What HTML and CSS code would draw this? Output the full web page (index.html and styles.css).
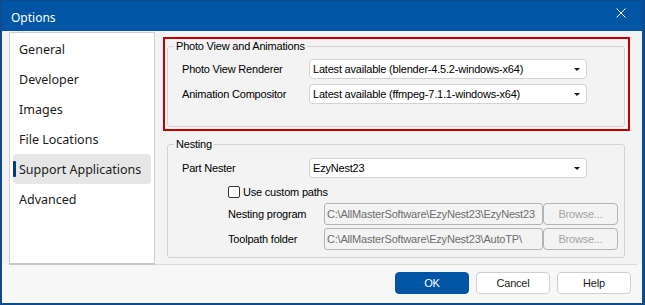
FILE: index.html
```html
<!DOCTYPE html>
<html lang="en">
<head>
<meta charset="utf-8">
<title>Options</title>
<link rel="stylesheet" href="styles.css">
</head>
<body>
<div class="window">
  <header class="titlebar">
    <span class="title">Options</span>
    <svg class="close" width="10" height="10" viewBox="0 0 10 10" aria-hidden="true">
      <path d="M0.5 0.5 L9.5 9.5 M9.5 0.5 L0.5 9.5" stroke="#ffffff" stroke-width="1" fill="none"/>
    </svg>
  </header>
  <div class="content">
    <nav class="sidebar">
      <div class="nav-item">General</div>
      <div class="nav-item">Developer</div>
      <div class="nav-item">Images</div>
      <div class="nav-item">File Locations</div>
      <div class="nav-item selected">Support Applications</div>
      <div class="nav-item">Advanced</div>
    </nav>
    <main class="panel">
      <div class="highlight">
        <fieldset class="group group-photo">
          <legend>Photo View and Animations</legend>
          <div class="rows">
            <div class="row">
              <span class="label">Photo View Renderer</span>
              <div class="combo"><span class="combo-text">Latest available (blender-4.5.2-windows-x64)</span><span class="arrow"></span></div>
            </div>
            <div class="row">
              <span class="label">Animation Compositor</span>
              <div class="combo"><span class="combo-text">Latest available (ffmpeg-7.1.1-windows-x64)</span><span class="arrow"></span></div>
            </div>
          </div>
        </fieldset>
      </div>
      <fieldset class="group group-nest">
        <legend>Nesting</legend>
        <div class="rows">
          <div class="row">
            <span class="label">Part Nester</span>
            <div class="combo"><span class="combo-text">EzyNest23</span><span class="arrow"></span></div>
          </div>
          <div class="row check-row">
            <span class="checkbox"></span>
            <span class="check-label">Use custom paths</span>
          </div>
          <div class="row path-row">
            <span class="path-label">Nesting program</span>
            <div class="textbox">C:\AllMasterSoftware\EzyNest23\EzyNest23</div>
            <div class="browse">Browse...</div>
          </div>
          <div class="row path-row second">
            <span class="path-label">Toolpath folder</span>
            <div class="textbox">C:\AllMasterSoftware\EzyNest23\AutoTP\</div>
            <div class="browse">Browse...</div>
          </div>
        </div>
      </fieldset>
    </main>
  </div>
  <footer class="footer">
    <button class="btn primary">OK</button>
    <button class="btn">Cancel</button>
    <button class="btn">Help</button>
  </footer>
</div>
</body>
</html>
```

FILE: styles.css
```css
html, body {
  margin: 0;
  padding: 0;
  background: #f3f3f3;
}

.window {
  width: 645px;
  height: 305px;
  box-sizing: border-box;
  border-style: solid;
  border-color: #0c4b8e;
  border-width: 1px 3px 2px 2px;
  background: #f3f3f3;
  display: flex;
  flex-direction: column;
  overflow: hidden;
  font-family: "Liberation Sans", Arial, sans-serif;
  font-size: 11px;
  letter-spacing: -0.2px;
  color: #000;
}

.titlebar {
  height: 30px;
  flex: none;
  background: #0055a5;
  display: flex;
  align-items: center;
  justify-content: space-between;
  padding: 0 16px 0 9px;
}

.title {
  font-family: "Noto Sans", "Open Sans", sans-serif;
  font-size: 12px;
  letter-spacing: 0;
  color: #ffffff;
  margin-top: 2px;
}

.close {
  display: block;
  margin-top: -7px;
}

.content {
  height: 234px;
  flex: none;
  display: flex;
}

.sidebar {
  width: 146px;
  height: 233px;
  margin: 1px 0 0 7px;
  box-sizing: border-box;
  background: #ffffff;
  border: 1px solid #d0d0d0;
  border-bottom: 2px solid #c8c8c8;
  padding: 1px 3px;
  display: flex;
  flex-direction: column;
}

.nav-item {
  height: 30px;
  flex: none;
  display: flex;
  align-items: center;
  padding-left: 6px;
  border-radius: 4px;
  font-family: "Noto Sans", "Open Sans", sans-serif;
  font-size: 12.5px;
  letter-spacing: 0;
  color: #1b1b1b;
  position: relative;
}

.nav-item.selected {
  background: #e6e6e6;
}

.nav-item.selected::before {
  content: "";
  position: absolute;
  left: 0;
  top: 7px;
  width: 3px;
  height: 16px;
  border-radius: 1px;
  background: #003d7a;
}

.panel {
  flex: 1;
  margin-right: 5px;
  border-bottom: 1px solid #d9d9d9;
  padding: 6px 0 0 8px;
  box-sizing: border-box;
}

.highlight {
  width: 467px;
  box-sizing: border-box;
  border: 2px solid #c00000;
  padding: 1px 3px 2px 2px;
}

.group {
  margin: 0;
  min-width: 0;
  border: 1px solid #d4d4d4;
  border-radius: 3px;
  padding: 6px 0 22px 0;
  width: 458px;
  box-sizing: border-box;
}

.group legend {
  padding: 0 2px;
  margin-left: 6px;
  font-size: 11px;
  line-height: 13px;
  color: #000;
}

.group-nest {
  margin: 7px 0 0 4px;
  padding: 7px 0 7px 0;
}

.rows {
  display: flex;
  flex-direction: column;
  padding-left: 14px;
}

.row {
  display: flex;
  align-items: center;
  height: 20px;
}

.group-photo .row + .row {
  margin-top: 5px;
}

.label {
  width: 127px;
  flex: none;
}

.combo {
  width: 278px;
  height: 20px;
  box-sizing: border-box;
  background: #ffffff;
  border: 1px solid #d2d2d2;
  border-radius: 4px;
  display: flex;
  align-items: center;
  justify-content: space-between;
  padding: 0 6px 0 3px;
}

.combo-text {
  white-space: nowrap;
}

.arrow {
  width: 0;
  height: 0;
  border-left: 3px solid transparent;
  border-right: 3px solid transparent;
  border-top: 3px solid #1a1a1a;
}

.check-row {
  margin-top: 4px;
  padding-left: 46px;
}

.checkbox {
  width: 12px;
  height: 12px;
  box-sizing: border-box;
  border: 1px solid #333333;
  border-radius: 2px;
  background: #ffffff;
  margin-right: 3px;
}

.path-row {
  height: 22px;
  margin-top: 1px;
  padding-left: 46px;
}

.path-row.second {
  margin-top: 3px;
}

.path-label {
  width: 96px;
  flex: none;
}

.textbox {
  width: 219px;
  height: 22px;
  box-sizing: border-box;
  border: 1px solid #b4b4b4;
  border-radius: 3px;
  background: #f3f3f3;
  color: #6d6d6d;
  padding: 0 0 0 2px;
  line-height: 20px;
  white-space: nowrap;
  overflow: hidden;
}

.browse {
  width: 75px;
  height: 22px;
  box-sizing: border-box;
  border: 1px solid #b4b4b4;
  border-radius: 4px;
  color: #a4a4a4;
  display: flex;
  align-items: center;
  justify-content: center;
}

.footer {
  flex: 1;
  background: #f7f7f7;
  display: flex;
  justify-content: flex-end;
  align-items: flex-start;
  gap: 7px;
  padding: 7px 11px 0 0;
}

.btn {
  width: 74px;
  height: 22px;
  margin: 0;
  padding: 0;
  box-sizing: border-box;
  border: 1px solid #d0d0d0;
  border-radius: 4px;
  background: #ffffff;
  font-family: "Liberation Sans", Arial, sans-serif;
  font-size: 11px;
  letter-spacing: -0.2px;
  color: #1a1a1a;
}

.btn.primary {
  background: #0055a5;
  border-color: #0055a5;
  color: #ffffff;
}
```
